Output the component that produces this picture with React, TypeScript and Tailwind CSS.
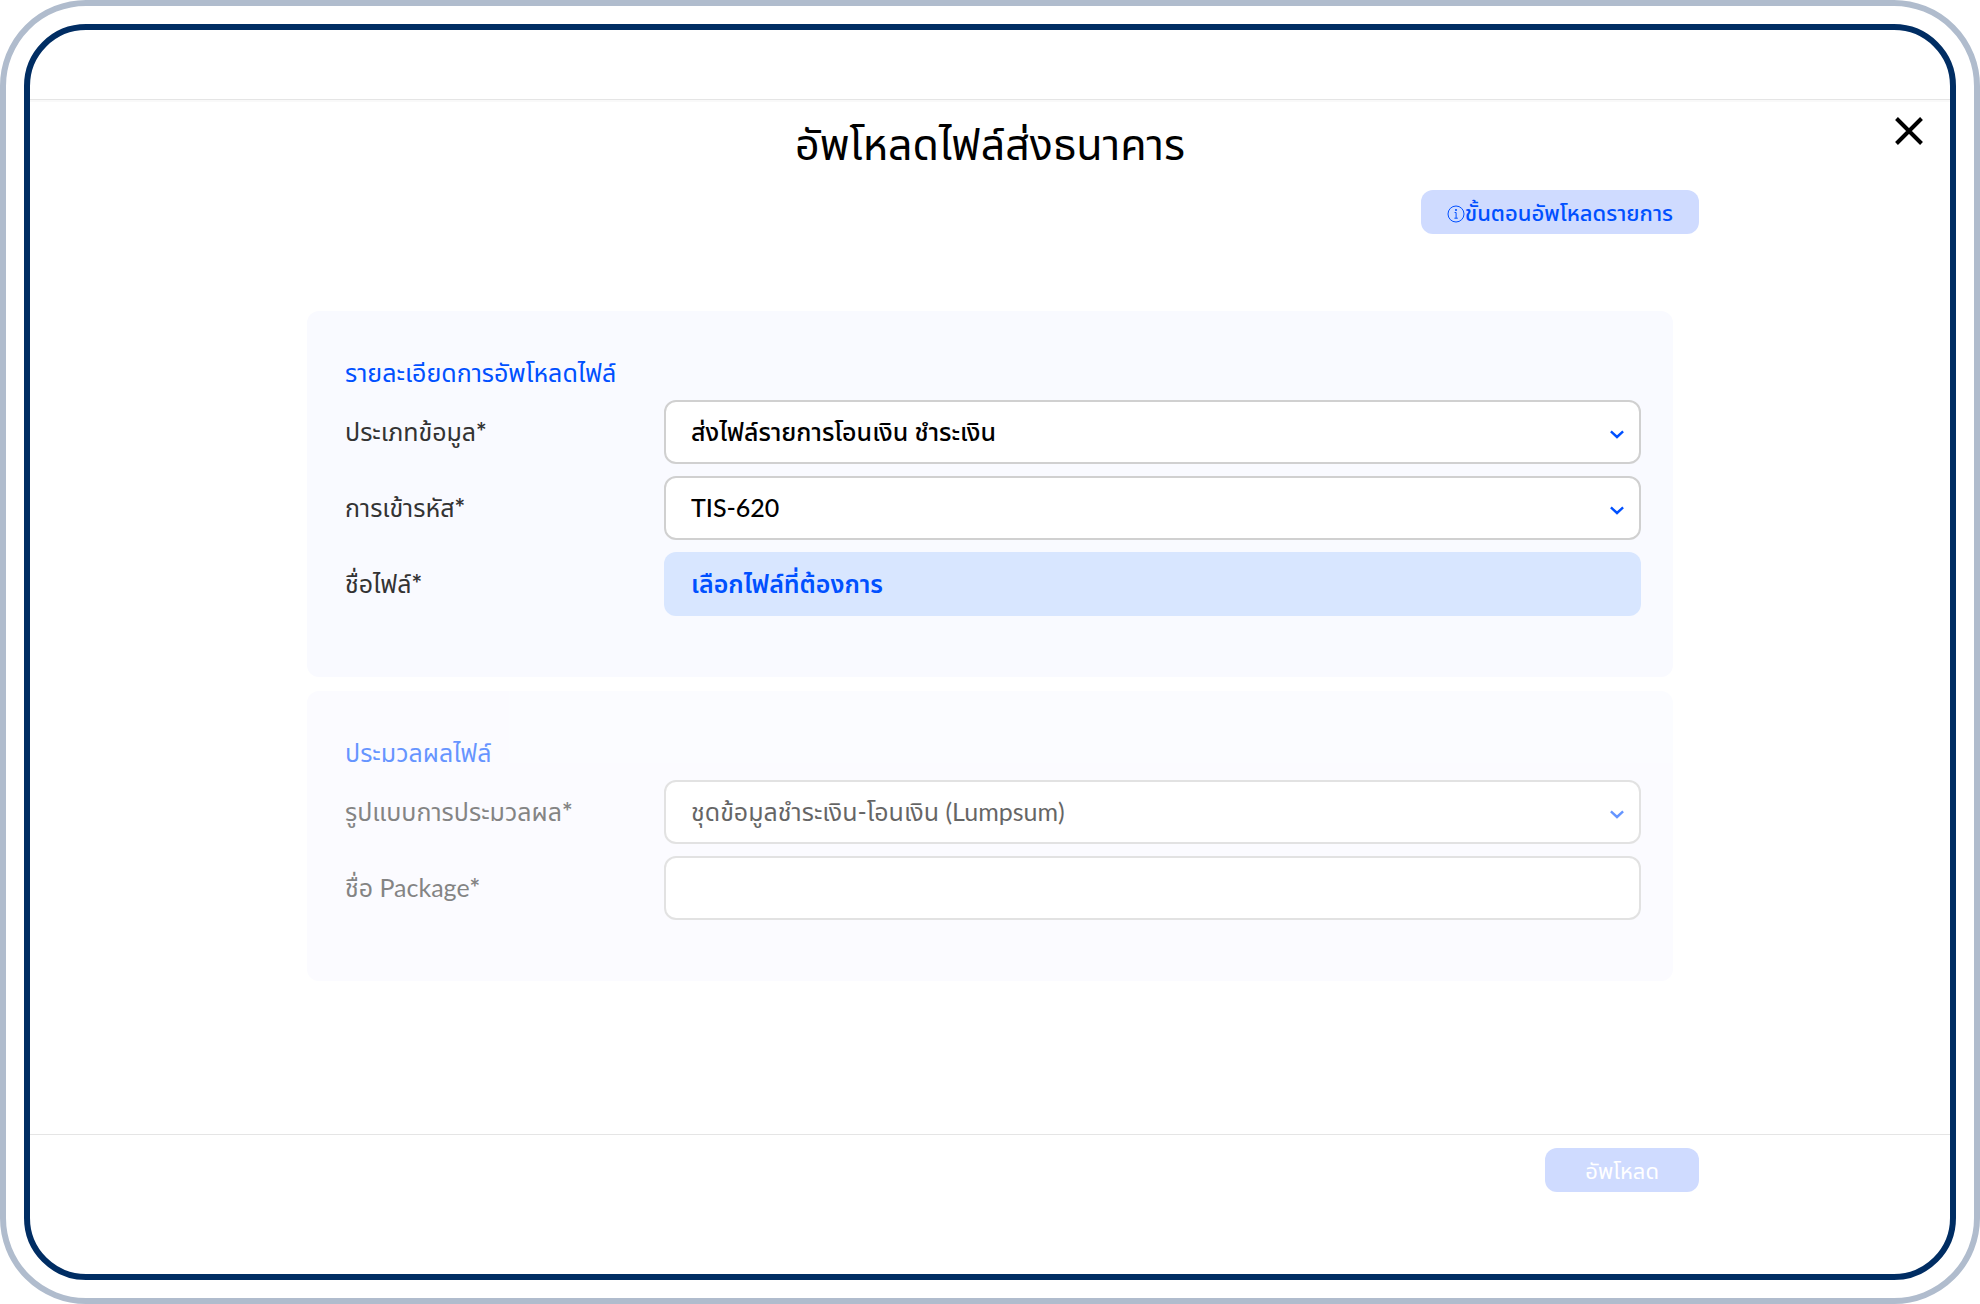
import { useState } from "react";
import type { ReactNode } from "react";

interface SelectFieldProps {
  id: string;
  options: string[];
  disabled?: boolean;
}

interface RowProps {
  id: string;
  label: string;
  children: ReactNode;
}

interface PanelProps {
  title: string;
  faded?: boolean;
  children: ReactNode;
}

const dataTypes = ["ส่งไฟล์รายการโอนเงิน ชำระเงิน"];
const encodings = ["TIS-620", "UTF-8"];
const processTypes = ["ชุดข้อมูลชำระเงิน-โอนเงิน (Lumpsum)"];

const ChevronIcon = () => (
  <svg
    viewBox="0 0 14 10"
    className="pointer-events-none absolute right-[17px] top-[30px] h-[10px] w-[14px] text-[#0050ff]"
    fill="none"
    stroke="currentColor"
    strokeWidth="2.4"
  >
    <path d="M0.9 1.4 L7 7 L13.1 1.4" />
  </svg>
);

const InfoIcon = () => (
  <svg viewBox="0 0 18 18" className="mt-1 h-[18px] w-[18px] shrink-0" fill="none" stroke="currentColor">
    <circle cx="9" cy="9" r="8" strokeWidth="1" />
    <path d="M7.6 7.5 H9.1 V13.2 M7.4 13.2 H10.8" strokeWidth="1" />
    <circle cx="9" cy="5" r="1.1" fill="currentColor" stroke="none" />
  </svg>
);

const SelectField = ({ id, options, disabled }: SelectFieldProps) => {
  const [value, setValue] = useState(options[0]);

  return (
    <div className="relative">
      <select
        id={id}
        value={value}
        disabled={disabled}
        onChange={(e) => setValue(e.target.value)}
        className="block h-16 w-full appearance-none rounded-xl border-2 border-[#d0d0d0] bg-white px-[25px] text-[25px] font-medium text-black opacity-100 disabled:font-normal"
      >
        {options.map((option) => (
          <option key={option}>{option}</option>
        ))}
      </select>
      <ChevronIcon />
    </div>
  );
};

const Row = ({ id, label, children }: RowProps) => (
  <div className="flex items-center">
    <label htmlFor={id} className="w-[319px] shrink-0 text-[25px] text-[#333333]">
      {label}
      <span className="font-bold">*</span>
    </label>
    <div className="flex-1">{children}</div>
  </div>
);

const Panel = ({ title, faded, children }: PanelProps) => (
  <section className={`rounded-xl bg-[#f9faff] pt-[41px] pb-[61px] pl-[38px] pr-8 ${faded ? "opacity-60" : ""}`}>
    <h2 className="mb-2 text-[25px] leading-10 text-[#0050ff]">{title}</h2>
    <div className="flex flex-col gap-3">{children}</div>
  </section>
);

export default function App() {
  const [packageName, setPackageName] = useState("");

  return (
    <div className="flex min-h-screen rounded-[86px] border-[6px] border-[#b0bccd] bg-white p-[18px] font-['Lato','Noto_Sans_Thai',sans-serif]">
      <div className="flex flex-1 flex-col overflow-hidden rounded-[62px] border-[6px] border-[#002d63]">
        <header className="h-[70px] border-b border-[#e5e5e5] shadow-[0_2px_0_#f9f9f9]" />

        <main className="relative flex-1 pt-[14px] pb-[153px]">
          <button type="button" aria-label="ปิด" className="absolute right-[27px] top-[17px] text-black">
            <svg viewBox="0 0 28 28" className="h-7 w-7" fill="none" stroke="currentColor" strokeWidth="4">
              <path d="M1.5 1.5 L26.5 26.5 M26.5 1.5 L1.5 26.5" />
            </svg>
          </button>

          <h1 className="text-center text-[43px] leading-[60px] text-black">อัพโหลดไฟล์ส่งธนาคาร</h1>

          <div className="mx-auto w-full max-w-[1418px]">
            <div className="mt-4 flex justify-end">
              <button
                type="button"
                className="flex h-11 items-center rounded-xl bg-[#cfdbff] px-[26px] text-[22px] font-medium text-[#0050ff]"
              >
                <InfoIcon />
                ขั้นตอนอัพโหลดรายการ
              </button>
            </div>

            <form className="mt-[77px] flex flex-col gap-[14px] px-[26px]">
              <Panel title="รายละเอียดการอัพโหลดไฟล์">
                <Row id="data-type" label="ประเภทข้อมูล">
                  <SelectField id="data-type" options={dataTypes} />
                </Row>
                <Row id="encoding" label="การเข้ารหัส">
                  <SelectField id="encoding" options={encodings} />
                </Row>
                <Row id="file-name" label="ชื่อไฟล์">
                  <button
                    id="file-name"
                    type="button"
                    className="block h-16 w-full rounded-xl bg-[#d8e6ff] px-[27px] text-left text-[25px] font-semibold text-[#0050ff]"
                  >
                    เลือกไฟล์ที่ต้องการ
                  </button>
                </Row>
              </Panel>

              <Panel title="ประมวลผลไฟล์" faded>
                <Row id="process-type" label="รูปแบบการประมวลผล">
                  <SelectField id="process-type" options={processTypes} disabled />
                </Row>
                <Row id="package-name" label="ชื่อ Package">
                  <input
                    id="package-name"
                    type="text"
                    value={packageName}
                    disabled
                    onChange={(e) => setPackageName(e.target.value)}
                    className="block h-16 w-full rounded-xl border-2 border-[#d0d0d0] bg-white px-[25px] text-[25px] text-black"
                  />
                </Row>
              </Panel>
            </form>
          </div>
        </main>

        <footer className="border-t border-[#e5e5e5] pt-[13px] pb-[82px]">
          <div className="mx-auto flex w-full max-w-[1418px] justify-end">
            <button type="button" disabled className="h-11 rounded-xl bg-[#cfdbff] px-10 text-[22px] text-white">
              อัพโหลด
            </button>
          </div>
        </footer>
      </div>
    </div>
  );
}
